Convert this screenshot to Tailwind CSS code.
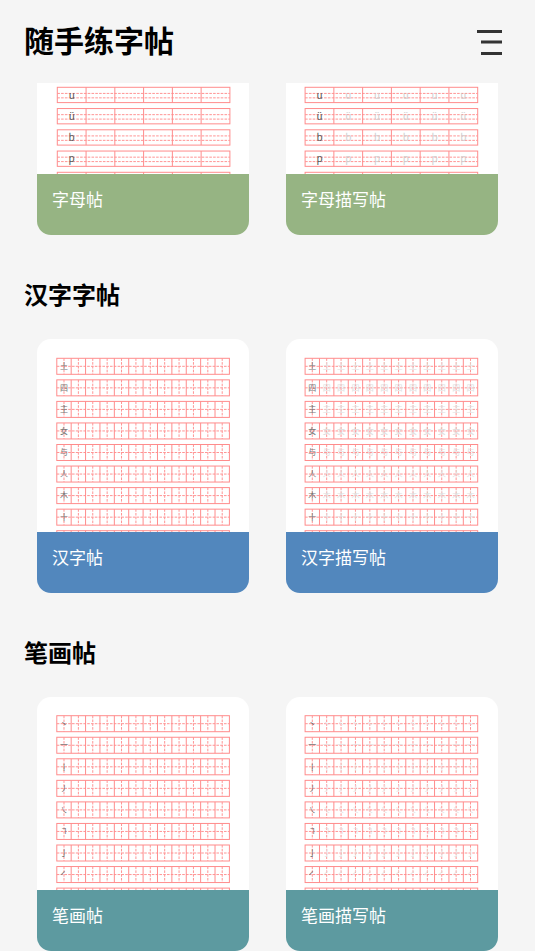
<!DOCTYPE html>
<html lang="zh">
<head>
  <meta charset="UTF-8" />
  <meta name="viewport" content="width=device-width, initial-scale=1.0" />
  <title>随手练字帖</title>
  <script src="https://cdn.jsdelivr.net/npm/@tailwindcss/browser@4"></script>
</head>
<body class="h-[951px] overflow-hidden bg-[#f5f5f5] font-['Noto_Sans_CJK_SC','Noto_Sans',sans-serif]">
  <!-- Header -->
  <header class="h-[83px] flex items-start justify-between pl-[24px] pr-[33px] pt-[19px]">
    <h1 class="text-[30px] leading-[40px] font-bold text-black">随手练字帖</h1>
    <svg class="w-[25px] h-[25px] mt-[11px]" viewBox="0 0 25 25" fill="#333">
      <rect x="0" y="0" width="25" height="3" />
      <rect x="4" y="10.5" width="21" height="3" />
      <rect x="4" y="22" width="21" height="3" />
    </svg>
  </header>

  <main class="h-[868px] overflow-hidden">
    <section class="-mt-[102px]">
      <div class="grid grid-cols-[212px_212px] gap-[37px] pl-[37px]">
        <div data-sheet="letter" data-x="20.3" data-y="21.3" data-name="字母帖"></div>
        <div data-sheet="letter" data-x="19.1" data-y="21.3" data-trace="1" data-name="字母描写帖"></div>
      </div>
    </section>

    <section class="mt-[44px]">
      <h2 class="h-[32px] mb-[29px] pl-[24px] -mt-[1px] text-[24px] leading-[32px] font-bold text-black">汉字字帖</h2>
      <div class="grid grid-cols-[212px_212px] gap-[37px] pl-[37px]">
        <div data-sheet="hanzi" data-x="19.8" data-y="19.3" data-name="汉字帖"></div>
        <div data-sheet="hanzi" data-x="19.1" data-y="19.3" data-trace="1" data-name="汉字描写帖"></div>
      </div>
    </section>

    <section class="mt-[44px]">
      <h2 class="h-[32px] mb-[29px] pl-[24px] -mt-[1px] text-[24px] leading-[32px] font-bold text-black">笔画帖</h2>
      <div class="grid grid-cols-[212px_212px] gap-[37px] pl-[37px]">
        <div data-sheet="stroke" data-x="19.8" data-y="18.7" data-name="笔画帖"></div>
        <div data-sheet="stroke" data-x="19.1" data-y="18.7" data-trace="1" data-name="笔画描写帖"></div>
      </div>
    </section>
  </main>

  <script>
    // worksheet previews: drawn at fractional coordinates so lines soften like a scaled image
    const SHEETS = {
      letter: { chars: ["a", "o", "e", "i", "u", "ü", "b", "p", "m"], cells: 6, h: 15.3, step: 21.25, size: 10, first: "#555", ghost: "#cfcfcf", rows: [0.4, 0.69], label: "bg-[#96b483]" },
      hanzi: { chars: ["土", "四", "主", "女", "与", "人", "木", "十", "三"], cells: 12, h: 16, step: 21.55, size: 8, first: "#777", ghost: "#dedede", rows: [0.5], label: "bg-[#5287bd]" },
      stroke: { chars: ["丶", "一", "丨", "丿", "㇏", "㇕", "亅", "㇒", "𠃋"], cells: 12, h: 16, step: 21.55, size: 8, first: "#666", ghost: "#e2e2e2", rows: [0.5], label: "bg-[#5d9aa0]" },
    };
    const W = 172.6;
    const LINE = 'stroke="#ff8c8c" stroke-width="1" fill="none"';
    const DASH = 'stroke="#ff9494" stroke-width="1" stroke-dasharray="2.6 1.2"';

    function rowSvg(sheet, char, x0, y, trace) {
      const cw = W / sheet.cells;
      let out = `<rect x="${x0}" y="${y}" width="${W}" height="${sheet.h}" ${LINE} />`;
      sheet.rows.forEach((r) => {
        const ly = y + sheet.h * r;
        out += `<line x1="${x0}" x2="${x0 + W}" y1="${ly}" y2="${ly}" ${DASH} />`;
      });
      for (let i = 0; i < sheet.cells; i++) {
        const cx = x0 + cw * i;
        if (i > 0) out += `<line x1="${cx}" x2="${cx}" y1="${y}" y2="${y + sheet.h}" ${LINE} />`;
        if (sheet.cells === 12) out += `<line x1="${cx + cw / 2}" x2="${cx + cw / 2}" y1="${y}" y2="${y + sheet.h}" ${DASH} />`;
        if (i === 0 || trace) {
          const fill = i === 0 ? sheet.first : sheet.ghost;
          out += `<text x="${cx + cw / 2}" y="${y + sheet.h / 2 + sheet.size * 0.36}" text-anchor="middle" font-size="${sheet.size}" fill="${fill}">${char}</text>`;
        }
      }
      return out;
    }

    document.querySelectorAll("[data-sheet]").forEach((el) => {
      const sheet = SHEETS[el.dataset.sheet];
      const x0 = parseFloat(el.dataset.x);
      const y0 = parseFloat(el.dataset.y);
      const trace = !!el.dataset.trace;
      const rows = sheet.chars.map((c, n) => rowSvg(sheet, c, x0, y0 + n * sheet.step, trace)).join("");
      el.className = "h-[254px] flex flex-col rounded-[14px] overflow-hidden bg-white";
      el.innerHTML = `
        <svg class="w-[212px] h-[193px] shrink-0" viewBox="0 0 212 193">${rows}</svg>
        <div class="h-[61px] pl-[15px] pt-[12px] text-[17px] leading-[25px] text-white ${sheet.label}">${el.dataset.name}</div>`;
    });
  </script>
</body>
</html>
